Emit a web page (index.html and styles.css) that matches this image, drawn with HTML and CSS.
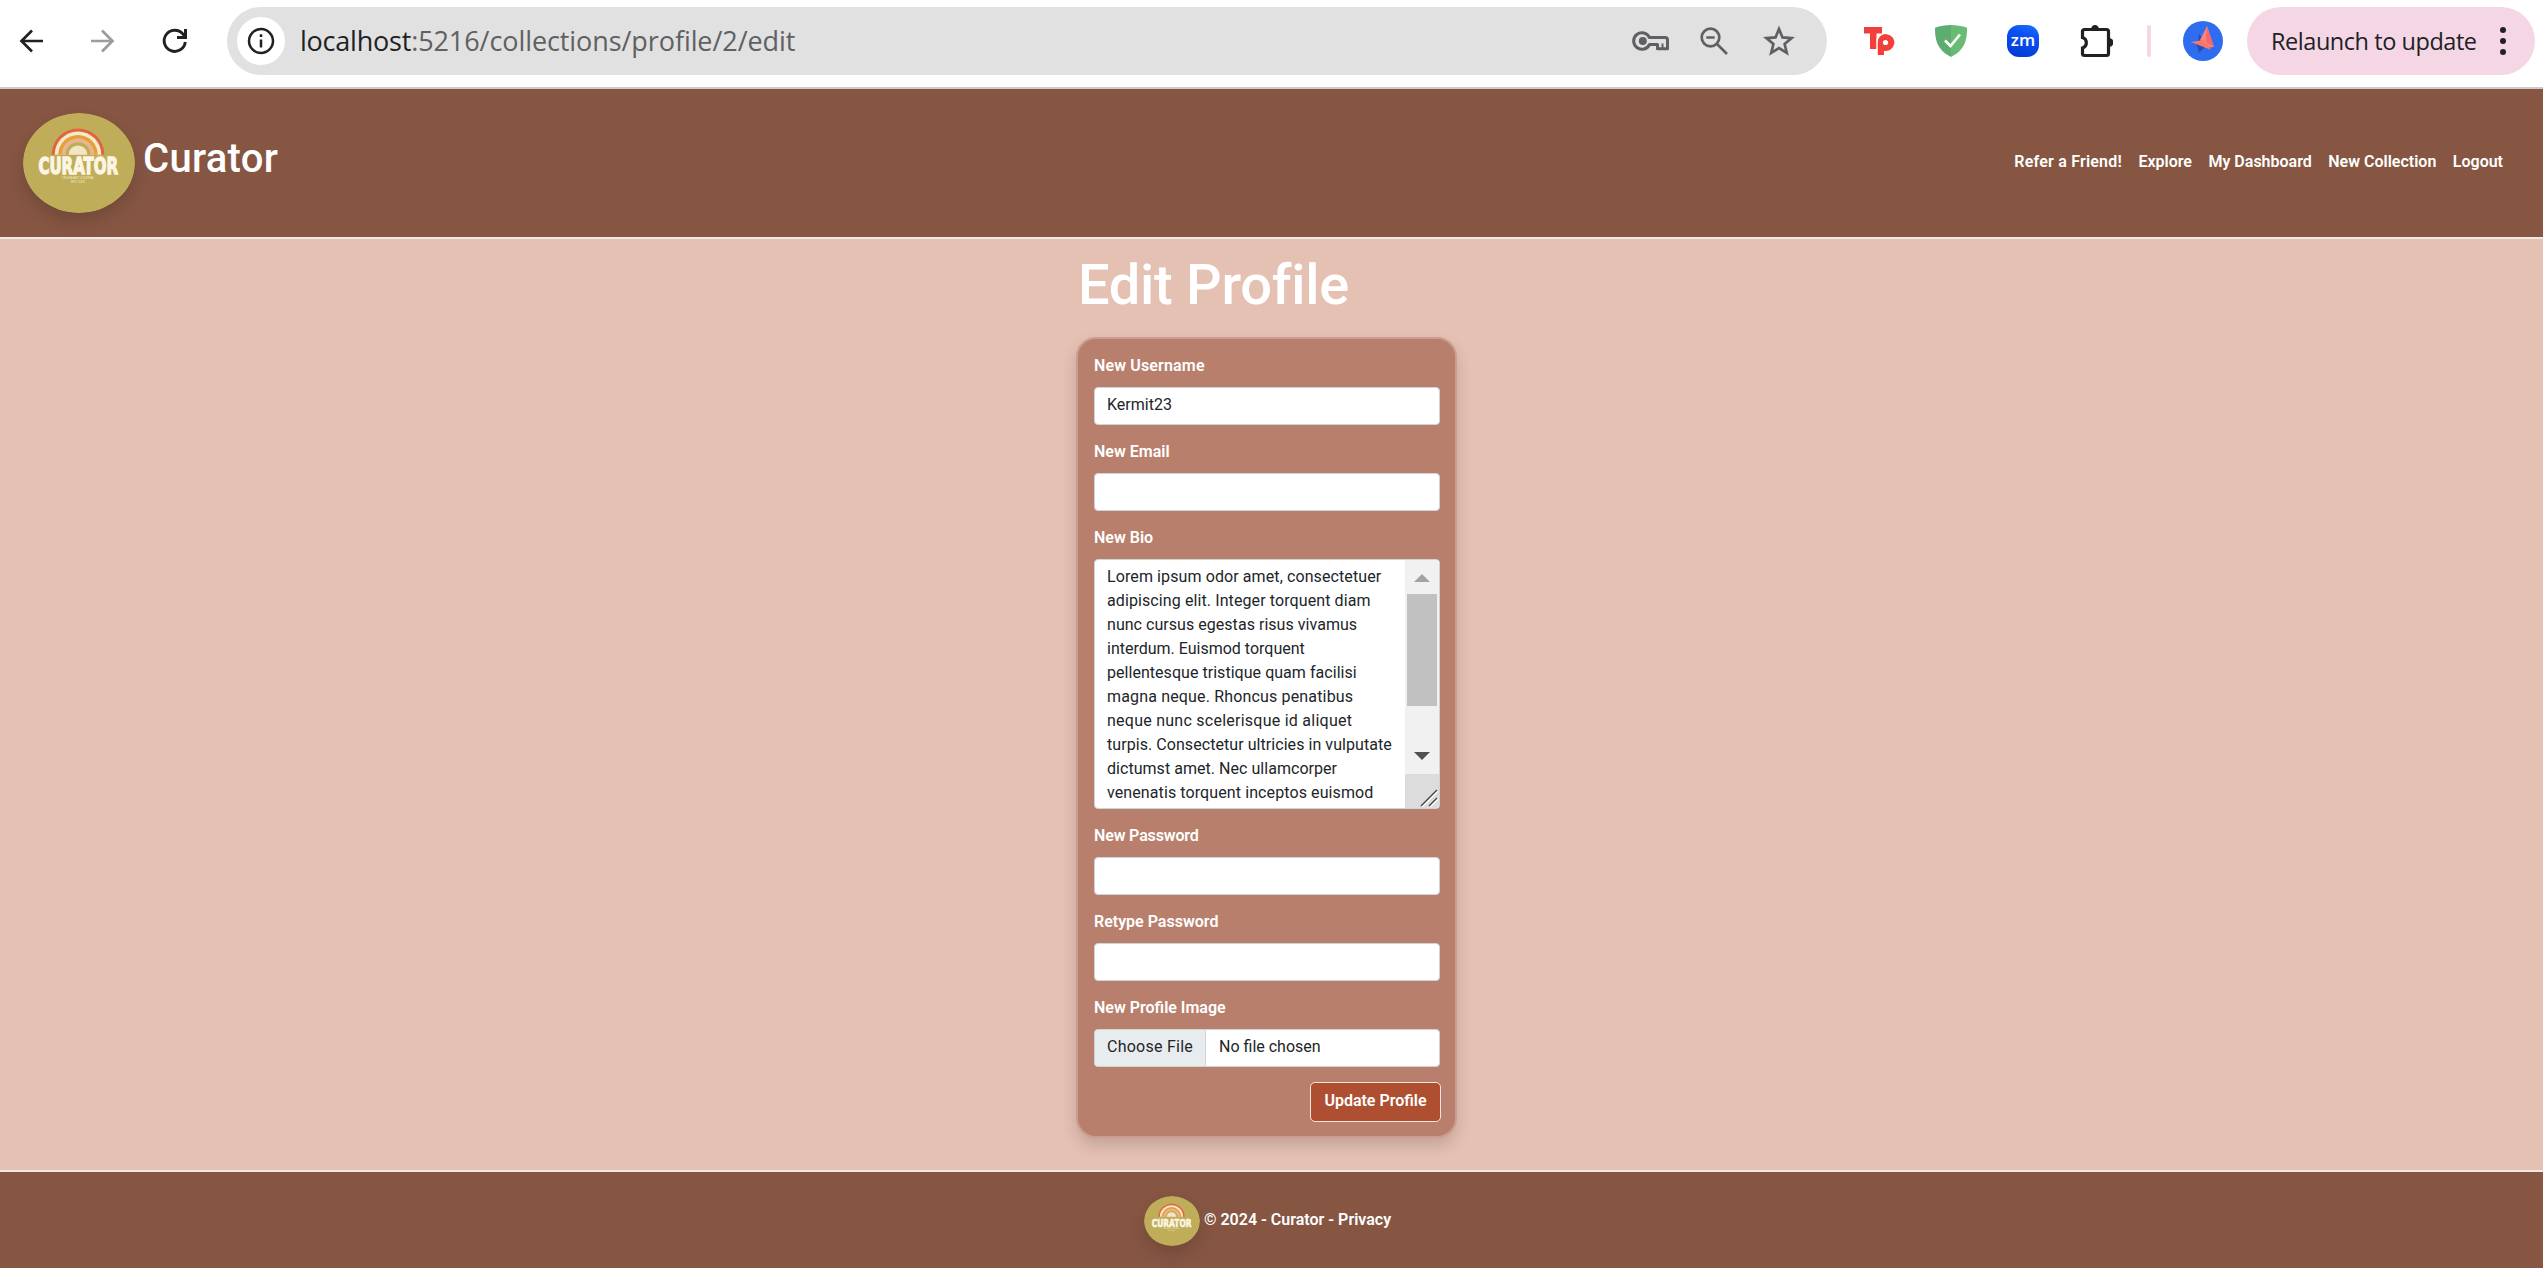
FILE: index.html
```html
<!DOCTYPE html>
<html lang="en">
<head>
<meta charset="utf-8">
<title>Edit Profile - Curator</title>
<link rel="stylesheet" href="styles.css">
</head>
<body>
<div class="toolbar">
  <svg class="ic back" width="30" height="30" viewBox="0 0 30 30"><path d="M26 15H4M15 4.500L4.500 15 15 25.500" fill="none" stroke="#202124" stroke-width="2.700"/></svg>
  <svg class="ic forward" width="30" height="30" viewBox="0 0 30 30"><path d="M3 15h22M14 4.500L24.500 15 14 25.500" fill="none" stroke="#9c9c9e" stroke-width="2.700"/></svg>
  <svg class="ic reload" width="30" height="30" viewBox="0 0 30 30"><path d="M25.300 16A10.600 10.600 0 1 1 22.800 7.900L25 10.500" fill="none" stroke="#202124" stroke-width="2.900"/><path d="M27 3v10H17v-3h7V3z" fill="#202124"/></svg>
  <div class="omnibox">
    <span class="info"><svg width="28" height="28" viewBox="0 0 28 28"><circle cx="14" cy="14" r="12" fill="none" stroke="#202124" stroke-width="2.500"/><path d="M14 12.500v8M14 7.300v2.700" stroke="#202124" stroke-width="2.500"/></svg></span>
    <span class="url"><b>localhost</b>:5216/collections/profile/2/edit</span>
    <svg class="key" width="38" height="22" viewBox="0 0 38 22" fill="none" stroke="#5f6063" stroke-width="3"><path d="M17.500 7.500A8.300 8.300 0 1 0 17.500 14.500H25.500V18.700H35.500V10Q35.500 7.500 33 7.500Z" stroke-linejoin="round"/><path d="M30.500 13.500v5" stroke-width="2"/><circle cx="10.800" cy="11" r="4" fill="#5f6063" stroke="none"/></svg>
    <svg class="lens" width="30" height="30" viewBox="0 0 30 30" fill="none" stroke="#5f6063" stroke-width="2.700"><circle cx="11.500" cy="11.500" r="8.800"/><path d="M18 18l10 10M7.300 11.500h8.400"/></svg>
    <svg class="star" width="32" height="32" viewBox="0 0 32 32"><path d="M16 4l3.500 8.400 9.100.7-7 5.900 2.200 9-7.800-4.800L8.200 28l2.200-9-7-5.900 9.100-.7z" fill="none" stroke="#5f6063" stroke-width="2.700"/></svg>
  </div>
  <svg class="ic tp" width="32" height="32" viewBox="0 0 32 32"><path d="M1 2h18v6.500h-5.500V24H7V8.500H1z" fill="#f23f3b"/><path d="M14.500 30V17.500A8.400 8.400 0 1 1 21 25.700V30z" fill="#f23f3b"/><path d="M14 30V13" stroke="#fff" stroke-width="1"/><circle cx="22.500" cy="17.500" r="2.600" fill="#fff"/></svg>
  <svg class="ic shield" width="32" height="32" viewBox="0 0 32 32"><path d="M16 0C11 0 5 1 0 2.800 0 15 2 25 16 32z" fill="#5dac70"/><path d="M16 0c5 0 11 1 16 2.800C32 15 30 25 16 32z" fill="#67bb72"/><path d="M10 15.500l5.500 5.500L25 9.500" fill="none" stroke="#fff" stroke-width="2.700"/></svg>
  <span class="zm">zm</span>
  <svg class="ic puzzle" width="34" height="34" viewBox="0 0 34 34"><path d="M3.500 7.500q0-2 2-2h22q2 0 2 2v22q0 2-2 2h-22q-2 0-2-2v-5.500a5.500 5.500 0 0 0 0-10.500z" fill="none" stroke="#202124" stroke-width="3.200"/><path d="M12 5.500a4 4.500 0 0 1 8 0zM29.500 14a4.500 4 0 0 1 0 9z" fill="#202124"/></svg>
  <span class="divider"></span>
  <svg class="ic avatar" width="40" height="40" viewBox="0 0 40 40"><circle cx="20" cy="20" r="20" fill="#2f6df0"/><path d="M13 22l3 10 7-7zM16 13l-1 8 6-1z" fill="#2450b5"/><path d="M24 5l-7 14 2 2 4 6 8-1z" fill="#ff8177"/><path d="M24 5l-1 16 8 5z" fill="#f4696c"/><path d="M8 21l12-2 4 5 4 5-10-4z" fill="#fa766c"/></svg>
  <span class="relaunch">Relaunch to update<svg width="8" height="30" viewBox="0 0 8 30" fill="#202124"><circle cx="4" cy="4" r="3"/><circle cx="4" cy="15" r="3"/><circle cx="4" cy="26" r="3"/></svg></span>
</div>

<header class="navbar">
  <svg class="logo" width="112" height="100" viewBox="0 0 112 100">
    <g id="logo">
      <ellipse cx="56" cy="50" rx="56" ry="50" fill="#bfad59"/>
      <path d="M28.700 41.700a26.300 26.300 0 0 1 52.600 0z" fill="#e0653f"/>
      <path d="M31.700 41.700a23.300 23.300 0 0 1 46.600 0z" fill="#f6e9cb"/>
      <path d="M35.300 41.700a19.700 19.700 0 0 1 39.400 0z" fill="#e5a035"/>
      <path d="M38.700 41.700a16.300 16.300 0 0 1 32.600 0z" fill="#e9b593"/>
      <path d="M42.500 41.700a12.500 12.500 0 0 1 25 0z" fill="#bfad59"/>
      <path d="M45.700 41.700a9.300 9.300 0 0 1 18.600 0z" fill="#f3e6c4"/>
      <text class="logo-word" x="15.500" y="61.200" textLength="79.500" lengthAdjust="spacingAndGlyphs">CURATOR</text>
      <text class="logo-tag" x="55" y="66" text-anchor="middle" textLength="33">ONLINE ART JOURNAL</text>
      <text class="logo-tag" x="55" y="70" text-anchor="middle" textLength="14">EST. 2024</text>
    </g>
  </svg>
  <span class="brand">Curator</span>
  <nav class="links"><a class="refer">Refer a Friend!</a><a>Explore</a><a>My Dashboard</a><a>New Collection</a><a>Logout</a></nav>
</header>

<main>
  <div class="column">
    <h1>Edit Profile</h1>
    <form class="card">
      <label class="wide">New Username</label>
      <div class="field">Kermit23</div>
      <label>New Email</label>
      <div class="field"></div>
      <label>New Bio</label>
      <div class="bio">
        <div class="bio-text"><p class="s3">Lorem ipsum odor amet, consectetuer</p><p class="s3">adipiscing elit. Integer torquent diam</p><p class="s1">nunc cursus egestas risus vivamus</p><p>interdum. Euismod torquent</p><p class="s1">pellentesque tristique quam facilisi</p><p class="s4">magna neque. Rhoncus penatibus</p><p class="s5">neque nunc scelerisque id aliquet</p><p class="s2">turpis. Consectetur ultricies in vulputate</p><p class="s1">dictumst amet. Nec ullamcorper</p><p class="s3">venenatis torquent inceptos euismod</p></div>
        <div class="scroll">
          <div class="track"><span class="up"></span><span class="thumb"></span><span class="down"></span></div>
          <svg class="grip" width="34" height="34" viewBox="0 0 34 34"><path d="M17 33L33 17M25 33l8-8" stroke="#fff" stroke-width="1.500"/><path d="M16 32L32 16M24 32l8-8" stroke="#444" stroke-width="1.400"/></svg>
        </div>
      </div>
      <label class="tight">New Password</label>
      <div class="field"></div>
      <label>Retype Password</label>
      <div class="field"></div>
      <label>New Profile Image</label>
      <div class="field file"><span class="choose">Choose File</span><span class="none">No file chosen</span></div>
      <div class="actions"><button type="button">Update Profile</button></div>
    </form>
  </div>
</main>

<footer>
  <svg class="logo" width="56" height="50" viewBox="0 0 112 100"><use href="#logo"/></svg>
  <span>© 2024 - Curator - Privacy</span>
</footer>
</body>
</html>
```
FILE: styles.css
```css
* { box-sizing: border-box; }
body {
  margin: 0;
  height: 1268px;
  display: flex;
  flex-direction: column;
  overflow: hidden;
  font: 16px/24px Roboto, sans-serif;
  color: #212529;
  background: #e5c1b4;
}
svg { display: block; flex: none; }
p, h1 { margin: 0; }

/* browser toolbar */
.toolbar {
  height: 89px;
  flex: none;
  display: flex;
  align-items: center;
  padding: 0 8px 5px 17px;
  background: #fff;
  border-bottom: 2px solid #ccc;
}
.forward { margin-left: 41px; }
.reload { margin-left: 42px; }
.omnibox {
  width: 1600px;
  height: 68px;
  margin-left: 37px;
  display: flex;
  align-items: center;
  border-radius: 34px;
  background: #e1e1e1;
}
.info {
  width: 48px;
  height: 48px;
  margin-left: 10px;
  display: grid;
  place-items: center;
  border-radius: 50%;
  background: #fff;
}
.url {
  width: 1332px;
  margin: 0 0 0 15px;
  font: 27px/40px "Open Sans", sans-serif;
  letter-spacing: -0.08px;
  color: #5f6063;
}
.url b { font-weight: 400; color: #202124; letter-spacing: -0.22px; }
.lens { margin-left: 29px; }
.star { margin-left: 34px; }
.tp { margin-left: 36px; }
.shield { margin-left: 40px; }
.zm {
  width: 32px;
  height: 32px;
  flex: none;
  margin-left: 40px;
  border-radius: 12px;
  background: linear-gradient(200deg, #1d72fb, #0b50f3 35%, #0338d0);
  color: #fff;
  font: 600 17px/29px "Open Sans", sans-serif;
  text-align: center;
}
.puzzle { margin-left: 40px; }
.divider {
  width: 4px;
  height: 32px;
  margin-left: 34px;
  border-radius: 2px;
  background: #f5d6e5;
}
.avatar { margin-left: 32px; }
.relaunch {
  width: 288px;
  height: 68px;
  margin-left: 24px;
  padding: 0 28px 0 24px;
  display: flex;
  align-items: center;
  justify-content: space-between;
  border-radius: 34px;
  background: #f5d6e5;
  color: #202124;
  font: 23.500px/40px "Open Sans", sans-serif;
  letter-spacing: -0.45px;
  white-space: nowrap;
}

/* site header */
.navbar {
  height: 150px;
  flex: none;
  display: flex;
  align-items: center;
  padding: 0 40px 0 23px;
  background: #865643;
  border-bottom: 2px solid #f0e8e6;
  color: #fff;
}
.logo {
  border-radius: 50%;
  box-shadow: 0 8px 16px rgba(0, 0, 0, .15);
}
.logo-word { font: 700 22.500px "DejaVu Sans", sans-serif; fill: #fcf5e3; stroke: #fcf5e3; stroke-width: 1.4; }
.logo-tag { font: 3.600px "Liberation Sans", sans-serif; fill: #efe5b9; }
.brand { margin: 0 0 9px 8px; font-size: 40px; font-weight: 500; letter-spacing: .3px; line-height: 48px; }
.links { margin: 0 0 3px auto; display: flex; gap: 16.500px; font-weight: 600; }
.refer { letter-spacing: .2px; }

/* form */
main { flex: 1; display: flex; justify-content: center; }
.column { width: 381px; margin-right: 10px; }
h1 {
  padding: 13px 0 18px 2px;
  font-size: 56px;
  line-height: 67px;
  font-weight: 500;
  letter-spacing: -.3px;
  color: #fff;
}
.card {
  height: 801px;
  padding: 16px 15px 14px 16px;
  border: 2px solid #cb9d8f;
  border-radius: 20px;
  background: #b97f6d;
  box-shadow: 0 8px 16px rgba(0, 0, 0, .15);
}
label { display: block; padding-bottom: 11px; line-height: 21px; font-weight: 600; color: #fff; }
.wide { letter-spacing: .15px; }
.tight { letter-spacing: -.15px; }
.field {
  height: 38px;
  margin-bottom: 16px;
  padding: 6px 12px 9px;
  border: 1px solid #ced4da;
  border-radius: 4px;
  background: #fff;
  line-height: 21px;
}
.bio {
  height: 250px;
  margin-bottom: 16px;
  display: flex;
  overflow: hidden;
  border: 1px solid #ced4da;
  border-radius: 4px;
  background: #fff;
}
.bio-text { flex: 1; padding: 5px 0 0 12px; white-space: nowrap; }
.s1 { letter-spacing: .04px; }
.s2 { letter-spacing: .06px; }
.s3 { letter-spacing: .1px; }
.s4 { letter-spacing: .16px; }
.s5 { letter-spacing: .25px; }
.scroll { width: 34px; display: flex; flex-direction: column; }
.track { flex: 1; display: flex; flex-direction: column; align-items: center; background: #f1f1f1; }
.up, .down { border: 8px solid transparent; }
.up { margin-top: 6px; border-bottom-color: #a3a3a3; }
.thumb { width: 30px; height: 112px; margin: 12px 0 46px; background: #c1c1c1; }
.down { border-top-color: #505050; }
.grip { background: #dcdcdc; }
.file { display: flex; padding: 0; overflow: hidden; }
.choose {
  width: 111px;
  padding: 6px 0 0 12px;
  border-right: 1px solid #ced4da;
  background: #e9ecef;
  letter-spacing: .25px;
}
.none { padding: 6px 0 0 13px; }
.actions { display: flex; justify-content: flex-end; margin: -1px -1px 0 0; }
button {
  width: 131px;
  height: 40px;
  padding: 0 0 2px;
  border: 1px solid #f8e4dc;
  border-radius: 5px;
  background: #ae4f31;
  color: #fff;
  font: 600 16px/24px Roboto, sans-serif;
}

footer {
  height: 98px;
  flex: none;
  display: flex;
  align-items: flex-start;
  justify-content: center;
  gap: 4px;
  padding: 24px 8px 0 0;
  background: #865643;
  border-top: 2px solid #f0e8e6;
  color: #fff;
  font-weight: 600;
}
footer span { padding-top: 12px; }
```
